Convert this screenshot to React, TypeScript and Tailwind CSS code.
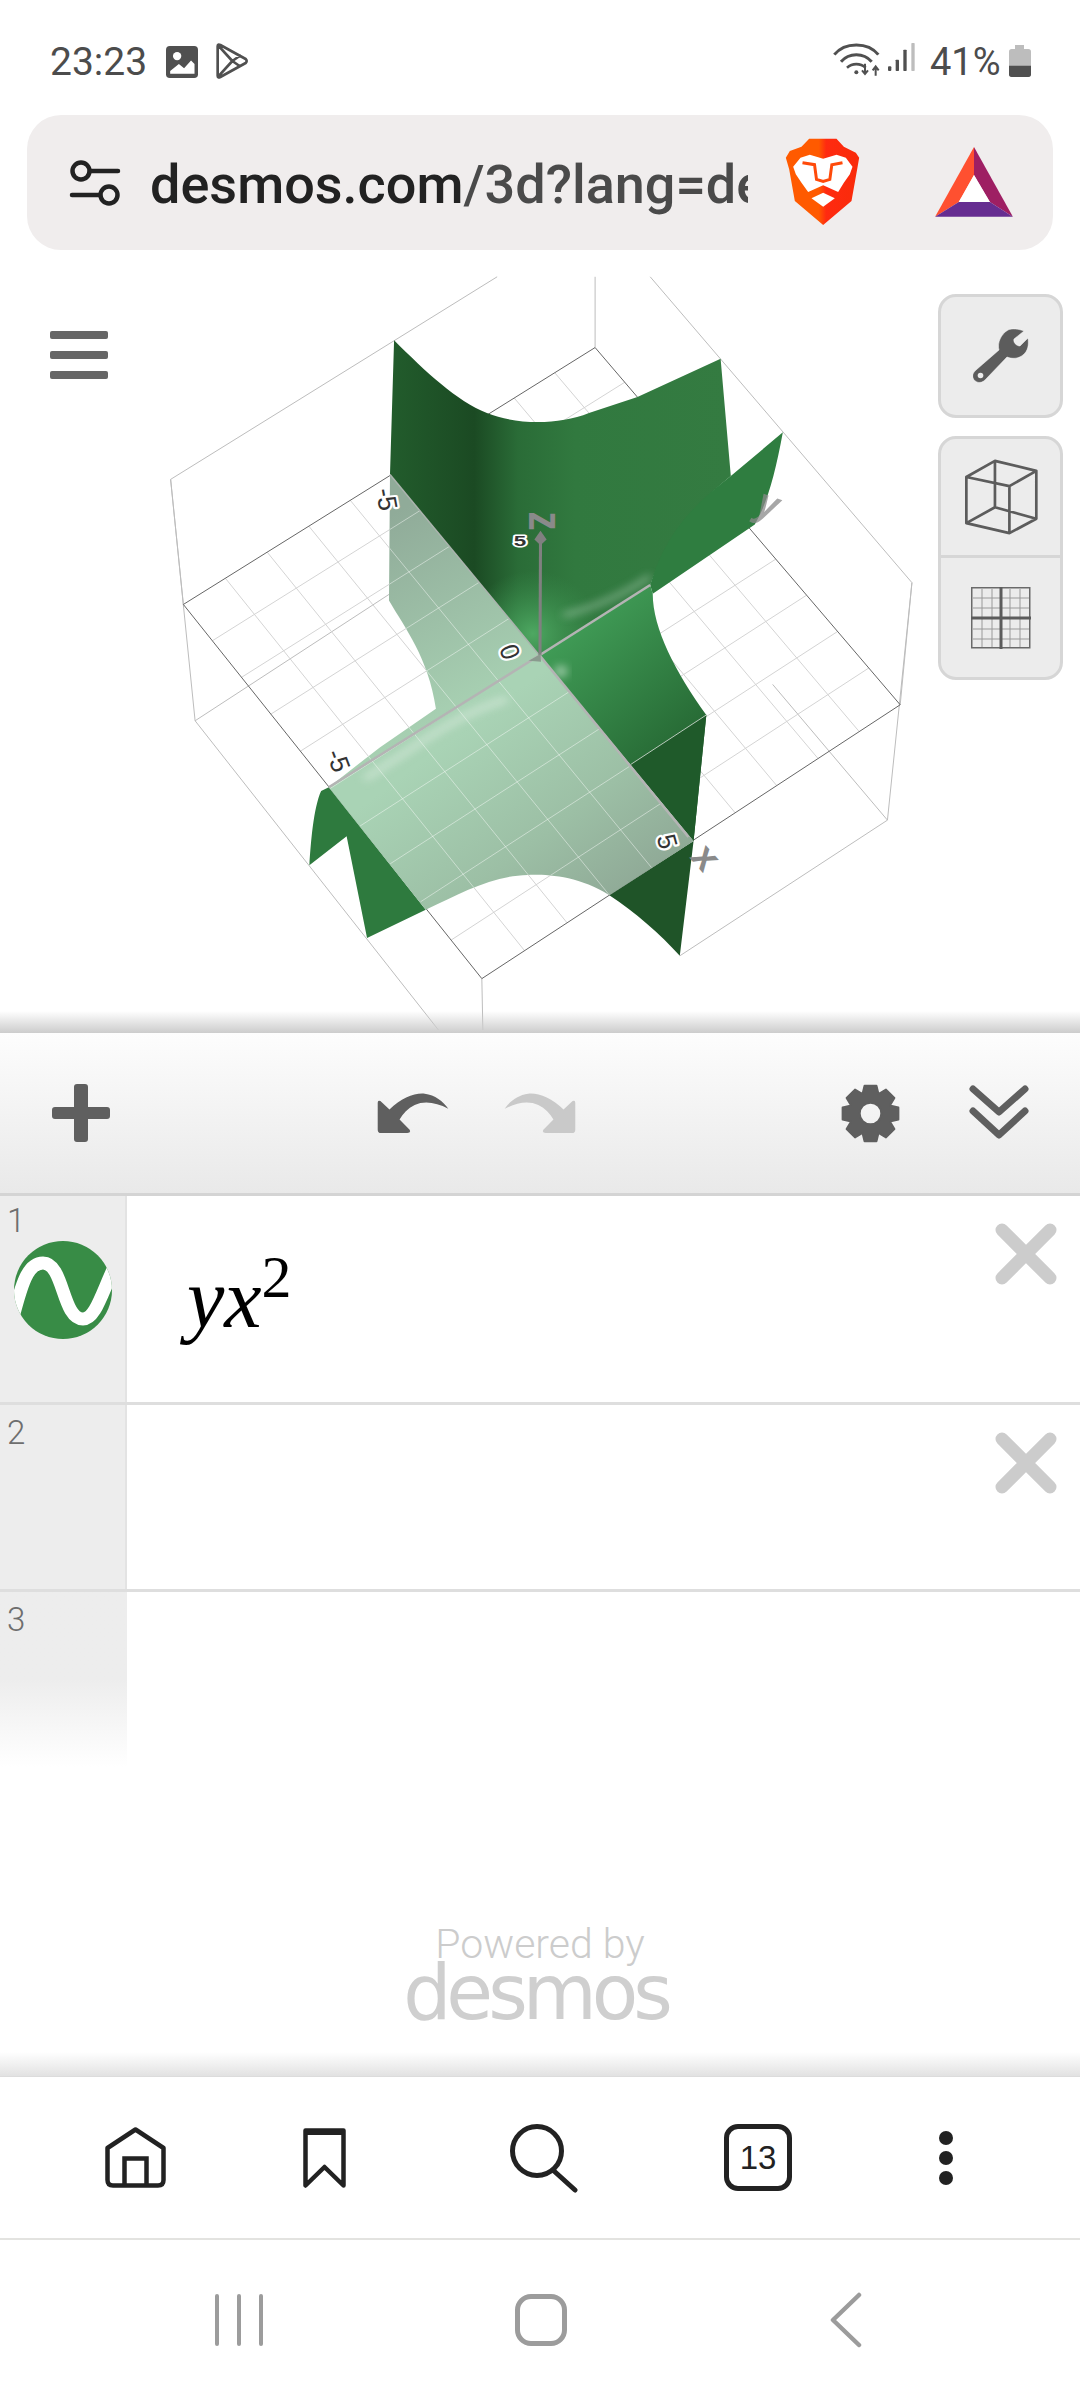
import React from "react";

type Pt = [number, number];

// z=0 square of the 3d box, in crop coordinates
const A: Pt = [85, 690];
const B: Pt = [892, 160];
const C: Pt = [1490, 897];
const D: Pt = [670, 1462];

const project = (u: number, v: number): Pt => {
  const dx1 = B[0] - C[0];
  const dx2 = D[0] - C[0];
  const sx = A[0] - B[0] + C[0] - D[0];
  const dy1 = B[1] - C[1];
  const dy2 = D[1] - C[1];
  const sy = A[1] - B[1] + C[1] - D[1];
  const den = dx1 * dy2 - dx2 * dy1;
  const g = (sx * dy2 - dx2 * sy) / den;
  const h = (dx1 * sy - sx * dy1) / den;
  const a = B[0] - A[0] + g * B[0];
  const b = D[0] - A[0] + h * D[0];
  const d = B[1] - A[1] + g * B[1];
  const e = D[1] - A[1] + h * D[1];
  const w = g * u + h * v + 1;
  return [(a * u + b * v + A[0]) / w, (d * u + e * v + A[1]) / w];
};

const gridLines: [Pt, Pt][] = [];
for (let i = 1; i < 10; i++) {
  gridLines.push([project(i / 10, 0), project(i / 10, 1)]);
  gridLines.push([project(0, i / 10), project(1, i / 10)]);
}

const boxLines = [
  "M60 432L700 14", "M60 432L108 930", "M108 930L585 1568", "M1000 14L1513 645", "M1513 645L1465 1135",
  "M1465 1135L1058 1415", "M892 14L892 160", "M670 1462L672 1568", "M108 930L490 668", "M1465 1135L1240 855",
  "M60 432L85 690", "M1513 645L1490 897", "M665 1215L666 1250",
];

const lightA = "M783 795L1085 1178L920 1290C860 1250 800 1247 760 1248C690 1250 630 1285 560 1320L370 1067Z";
const lightB = "M783 795L490 422L488 682C520 740 565 800 580 905L470 985L370 1067Z";

const gearPath = (() => {
  let d = "";
  const c = 90;
  for (let i = 0; i < 8; i++) {
    const t = -90 + i * 45;
    const pts: [number, number][] = [[t - 21, 64], [t - 12, 84], [t + 12, 84], [t + 21, 64]];
    pts.forEach(([ang, r], j) => {
      const rad = (ang * Math.PI) / 180;
      d += `${i === 0 && j === 0 ? "M" : "L"}${(c + r * Math.cos(rad)).toFixed(1)} ${(c + r * Math.sin(rad)).toFixed(1)}`;
    });
  }
  return d + "Z M90 58A32 32 0 1 0 90 122A32 32 0 1 0 90 58Z";
})();

const Graph = () => (
  <svg className="absolute inset-0" width="1080" height="783" viewBox="0 0 1080 783">
    <defs>
      <linearGradient id="backSheet" gradientUnits="userSpaceOnUse" x1="490" y1="0" x2="1150" y2="0">
        <stop offset="0" stopColor="#225c2c" />
        <stop offset="0.25" stopColor="#1b4a23" />
        <stop offset="0.38" stopColor="#2a6c37" />
        <stop offset="0.55" stopColor="#31793f" />
        <stop offset="1" stopColor="#347b41" />
      </linearGradient>
      <linearGradient id="rightSheet" gradientUnits="userSpaceOnUse" x1="800" y1="790" x2="1080" y2="1100">
        <stop offset="0" stopColor="#3f9a55" />
        <stop offset="1" stopColor="#1f5a2a" />
      </linearGradient>
      <linearGradient id="frontSheet" gradientUnits="userSpaceOnUse" x1="760" y1="850" x2="1060" y2="1230">
        <stop offset="0" stopColor="#a9d3b5" />
        <stop offset="0.55" stopColor="#9cbfa5" />
        <stop offset="1" stopColor="#8ea795" />
      </linearGradient>
      <linearGradient id="leftSheet" gradientUnits="userSpaceOnUse" x1="500" y1="500" x2="720" y2="900">
        <stop offset="0" stopColor="#90ab99" />
        <stop offset="1" stopColor="#a9d3b4" />
      </linearGradient>
      <radialGradient id="centerGlow" gradientUnits="userSpaceOnUse" cx="770" cy="750" r="130">
        <stop offset="0" stopColor="#4ea862" stopOpacity="1" />
        <stop offset="1" stopColor="#3c9350" stopOpacity="0" />
      </radialGradient>
      <filter id="soft" x="-40%" y="-60%" width="180%" height="220%">
        <feGaussianBlur stdDeviation="9" />
      </filter>
      <clipPath id="backClip">
        <path d="M498 145C560 210 620 270 680 295C740 320 820 320 880 295L975 262L1138 183L1158 425C1080 490 1030 560 1000 650L783 795L490 422Z" />
      </clipPath>
      <clipPath id="lightClip">
        <path d={lightA + lightB} />
      </clipPath>
    </defs>
    <g transform="translate(140 20) scale(0.5102 0.4847)">
      {boxLines.map((d) => (
        <path key={d} d={d} fill="none" stroke="#bdbdbd" strokeWidth="1" vectorEffect="non-scaling-stroke" />
      ))}
      {gridLines.map(([p, q], i) => (
        <line key={i} x1={p[0]} y1={p[1]} x2={q[0]} y2={q[1]} stroke="#d4d4d4" strokeWidth="1" vectorEffect="non-scaling-stroke" />
      ))}
      <path d={`M${A[0]} ${A[1]}L${B[0]} ${B[1]}L${C[0]} ${C[1]}L${D[0]} ${D[1]}Z`} fill="none" stroke="#666" strokeWidth="1" vectorEffect="non-scaling-stroke" />

      {/* surface, dark back sheets */}
      <path d="M498 145C560 210 620 270 680 295C740 320 820 320 880 295L975 262L1138 183L1158 425C1080 490 1030 560 1000 650L783 795L490 422Z" fill="url(#backSheet)" />
      <g clipPath="url(#backClip)">
        <circle cx="770" cy="750" r="130" fill="url(#centerGlow)" />
        <path d="M830 712C880 700 950 670 1000 632" fill="none" stroke="#cfe6d4" strokeWidth="9" opacity="0.55" filter="url(#soft)" />
      </g>
      <path d="M1260 335C1245 420 1230 480 1205 525L1005 668L1000 650C1030 540 1090 480 1158 425Z" fill="#2f7d40" />
      <path d="M783 795L1000 650L1005 668C1005 740 1050 830 1110 918L1085 1178Z" fill="url(#rightSheet)" />
      <path d="M1085 1178L1110 918L962 1020Z" fill="#1f5a2a" />
      <path d="M1085 1178L1058 1415C1020 1370 970 1325 920 1290Z" fill="#1f5428" />
      <path d="M370 1067L355 1075C340 1110 335 1180 332 1228L405 1168L445 1378L560 1320Z" fill="#2e7a3e" />
      <circle cx="825" cy="828" r="12" fill="#e8f5ea" opacity="0.6" filter="url(#soft)" />

      {/* part of the surface under the plane */}
      <path d={lightA} fill="url(#frontSheet)" />
      <path d={lightB} fill="url(#leftSheet)" />
      <g clipPath="url(#lightClip)">
        {gridLines.map(([p, q], i) => (
          <line key={i} x1={p[0]} y1={p[1]} x2={q[0]} y2={q[1]} stroke="#ffffff" strokeOpacity="0.45" strokeWidth="1" vectorEffect="non-scaling-stroke" />
        ))}
        <path d="M440 1050C540 985 620 915 720 885" fill="none" stroke="#e2f0e5" strokeWidth="14" opacity="0.55" filter="url(#soft)" />
      </g>
      <line x1="962" y1="1020" x2="1110" y2="918" stroke="#b8c9bb" strokeWidth="1" vectorEffect="non-scaling-stroke" />

      {/* axes */}
      <line x1="783" y1="795" x2="1000" y2="650" stroke="#b4b4b4" strokeWidth="5" />
      <line x1="783" y1="795" x2="370" y2="1067" stroke="#b4b4b4" strokeWidth="5" />
      <line x1="783" y1="795" x2="1075" y2="1170" stroke="#b4b4b4" strokeWidth="5" />
      <line x1="783" y1="795" x2="490" y2="422" stroke="#aab3ad" strokeWidth="3" />
      <line x1="784" y1="795" x2="785" y2="560" stroke="#808080" strokeWidth="6" />
      <path d="M785 538L797 556L785 568L773 556Z" fill="#808080" />
      <path d="M762 806L785 792L786 808Z" fill="#8a9a8e" />

      {/* tick labels */}
      <g fontFamily="'Liberation Sans', sans-serif" fontSize="52" fill="#333" stroke="#fff" strokeWidth="9" paintOrder="stroke" strokeLinejoin="round" textAnchor="middle">
        <text transform="translate(466 476) rotate(80)">-5</text>
        <text transform="translate(708 794) rotate(70)">0</text>
        <text transform="translate(372 1018) rotate(70)">-5</text>
        <text transform="translate(1016 1184) rotate(75)">5</text>
        <text transform="translate(745 570) scale(1 0.7)" fontSize="44" fontWeight="700">5</text>
      </g>
      <g fontFamily="'Liberation Sans', sans-serif" fontWeight="700" fill="#8a8a8a" textAnchor="middle">
        <text transform="translate(762 518) rotate(90) scale(1.1 1.3)" fontSize="72">z</text>
        <text transform="translate(1222 510) rotate(20) scale(1 1.2)" fontSize="72" fontStyle="italic" opacity="0.75">y</text>
        <text transform="translate(1090 1228) rotate(50)" fontSize="78">x</text>
      </g>
    </g>
  </svg>
);

const Lion = () => (
  <svg className="absolute left-[785px] top-[138px]" width="75" height="88" viewBox="46 26 224 264">
    <defs>
      <linearGradient id="lionFill" x1="0" y1="0" x2="1" y2="0">
        <stop offset="0" stopColor="#ff5a00" />
        <stop offset="0.45" stopColor="#ff5a00" />
        <stop offset="0.55" stopColor="#ff2a10" />
        <stop offset="1" stopColor="#f92b0a" />
      </linearGradient>
    </defs>
    <path d="M118 28L200 28L222 52L258 70L268 85L262 120L245 215L160 287L75 215L58 120L48 85L60 65L95 52Z" fill="url(#lionFill)" />
    <path d="M70 112L92 85L120 76L160 88L200 76L228 85L248 112L240 135L222 160L205 188L160 168L115 188L95 160L78 135Z" fill="#fff" />
    <path d="M98 100L134 106L140 150L160 156L180 150L186 106L218 100" fill="none" stroke="#ff4a0a" strokeWidth="9" />
    <path d="M125 207L160 190L195 207L160 232Z" fill="#fff" />
  </svg>
);

const Bat = () => (
  <svg className="absolute left-[935px] top-[147px]" width="78" height="70" viewBox="498 52 230 207">
    <path d="M613 52L613 135L568 215L498 258Z" fill="#ff5030" />
    <path d="M613 52L728 258L660 215L613 135Z" fill="#9e1f63" />
    <path d="M498 258L568 215L660 215L728 258Z" fill="#662d91" />
    <path d="M613 135L568 215L660 215Z" fill="#fff" />
  </svg>
);

const CloseX = () => (
  <svg width="62" height="62" viewBox="0 0 62 62">
    <path d="M7 7L55 55M55 7L7 55" stroke="#cccccc" strokeWidth="13" strokeLinecap="round" />
  </svg>
);

const App = () => {
  return (
    <div className="relative flex h-[2400px] w-[1080px] flex-col overflow-hidden bg-white font-['Roboto',sans-serif]">
      {/* status bar */}
      <div className="relative h-[115px] shrink-0 text-[38px] text-[#4c4c4c]">
        <div className="absolute left-[50px] top-[39px] leading-[46px] text-[39px]">23:23</div>
        <svg className="absolute left-[166px] top-[46px]" width="32" height="32" viewBox="0 0 92 92">
          <rect width="92" height="92" rx="11" fill="#505050" />
          <circle cx="32" cy="29" r="12" fill="#fff" />
          <path d="M12 72L37 52L52 64L72 42L82 52V80H12Z" fill="#fff" />
        </svg>
        <svg className="absolute left-[215px] top-[43px]" width="34" height="36" viewBox="0 0 102 108">
          <path d="M8 10Q8 2 16 6L92 48Q98 54 92 60L16 102Q8 106 8 98Z M10 8L52 54L10 100M52 54L78 36M52 54L78 72" fill="none" stroke="#505050" strokeWidth="8" strokeLinejoin="round" />
        </svg>
        <svg className="absolute left-[833px] top-[43px]" width="84" height="36" viewBox="0 0 252 108">
          <path d="M4 35C35 -4 105 -4 136 35M24 56C48 28 92 28 116 56" fill="none" stroke="#505050" strokeWidth="9" />
          <path d="M42 74C58 60 82 60 98 74" fill="none" stroke="#505050" strokeWidth="8" />
          <circle cx="70" cy="88" r="6" fill="#505050" />
          <path d="M96 62V92M87 82L96 93L105 82M128 98V74M119 82L128 70L137 82" fill="none" stroke="#505050" strokeWidth="6" />
          <rect x="165" y="70" width="10" height="14" rx="3" fill="#505050" />
          <rect x="188" y="50" width="10" height="34" rx="2" fill="#505050" />
          <rect x="211" y="20" width="10" height="64" rx="2" fill="#505050" />
          <rect x="235" y="0" width="10" height="84" rx="2" fill="#bdbdbd" />
        </svg>
        <div className="absolute left-[930px] top-[39px] text-[38px] leading-[46px]">41%</div>
        <svg className="absolute left-[1009px] top-[45px]" width="22" height="32" viewBox="0 0 66 96">
          <path d="M18 0H45V12H58Q66 12 66 20V88Q66 96 58 96H8Q0 96 0 88V20Q0 12 8 12H18Z" fill="#bdbdbd" />
          <path d="M0 62H66V88Q66 96 58 96H8Q0 96 0 88Z" fill="#505050" />
        </svg>
      </div>

      {/* url bar */}
      <div className="mx-[27px] flex h-[135px] shrink-0 items-center rounded-[34px] bg-[#f0eded]">
        <svg className="ml-[42px]" width="52" height="50" viewBox="0 0 52 50">
          <circle cx="12" cy="13" r="8.5" fill="none" stroke="#222" strokeWidth="4.5" />
          <path d="M21 13H49M3 37H31" stroke="#222" strokeWidth="4.5" strokeLinecap="round" />
          <circle cx="40" cy="37" r="8.5" fill="none" stroke="#222" strokeWidth="4.5" />
        </svg>
        <div className="ml-[29px] mt-[4px] w-[598px] overflow-hidden whitespace-nowrap text-[54px] font-medium leading-[62px] text-[#4a4a4a]">
          <span className="text-[#222]">desmos.com</span>/3d?lang=de
        </div>
      </div>
      <Lion />
      <Bat />

      {/* 3d graph */}
      <div className="relative h-[783px] shrink-0">
        <Graph />
        <div className="absolute left-[50px] top-[81px] flex flex-col gap-[12px]">
          <div className="h-[8px] w-[58px] rounded-[2px] bg-[#666]" />
          <div className="h-[8px] w-[58px] rounded-[2px] bg-[#666]" />
          <div className="h-[8px] w-[58px] rounded-[2px] bg-[#666]" />
        </div>
        <div className="absolute left-[938px] top-[44px] flex flex-col gap-[18px]">
          <div className="flex h-[124px] w-[125px] items-center justify-center rounded-[18px] border-[3px] border-[#d6d6d6] bg-[#ececec]">
            <svg width="56" height="56" viewBox="0 0 56 56">
              <path d="M35 2C39 0 46 1 51 3L41 11C40 14 43 18 47 18L55 10C56 17 55 23 50 27C45 31 39 31 34 29L12 52C8 56 2 55 0 50C-1 47 0 45 3 42L26 22C24 15 28 6 35 2Z" fill="#5c5c5c" stroke="#fff" strokeWidth="0.5" />
              <circle cx="7.5" cy="47.5" r="2.8" fill="#ececec" />
            </svg>
          </div>
          <div className="flex h-[244px] w-[125px] flex-col rounded-[18px] border-[3px] border-[#d6d6d6] bg-[#ececec]">
            <div className="flex h-[119px] shrink-0 items-center justify-center border-b-[3px] border-[#d6d6d6]">
              <svg width="74" height="76" viewBox="190 565 220 225">
                <path d="M197 618L282 570L405 600L325 645ZM197 755L282 708L405 742L325 785ZM197 618V755M282 570V708M405 600V742M325 645V785" fill="none" stroke="#5c5c5c" strokeWidth="8" strokeLinejoin="round" />
              </svg>
            </div>
            <div className="flex flex-1 items-center justify-center">
              <svg width="60" height="62" viewBox="0 0 60 62">
                <rect x="0.75" y="0.75" width="58" height="60" fill="none" stroke="#6a6a6a" strokeWidth="1.5" />
                <path d="M2 11H58M2 21H58M2 42H58M2 52H58M11 2V60M21 2V60M39 2V60M49 2V60" stroke="#9a9a9a" strokeWidth="1" />
                <path d="M30 0V62M0 31H60" stroke="#5c5c5c" strokeWidth="3" />
              </svg>
            </div>
          </div>
        </div>
        <div className="absolute bottom-0 left-0 h-[22px] w-full bg-linear-to-b from-transparent to-[#cccccc]" />
      </div>

      {/* expression list */}
      <div className="flex h-[163px] shrink-0 items-center border-b-[3px] border-[#d4d4d4] bg-linear-to-b from-[#fdfdfd] to-[#e9e9e9]">
        <svg className="ml-[52px]" width="58" height="58" viewBox="0 0 58 58">
          <path d="M22 3Q22 0 25 0H33Q36 0 36 3V23H55Q58 23 58 26V32Q58 35 55 35H36V55Q36 58 33 58H25Q22 58 22 55V35H3Q0 35 0 32V26Q0 23 3 23H22Z" fill="#5f5f5f" />
        </svg>
        <svg className="ml-[267px]" width="72" height="41" viewBox="48 56 214 122">
          <path d="M50 85Q50 76 58 80L85 105C120 70 160 55 190 58C220 62 245 80 260 103C225 85 190 78 160 92C140 102 125 118 115 135L145 165Q150 175 138 175H60Q50 175 50 165Z" fill="#5f5f5f" />
        </svg>
        <svg className="ml-[55px]" width="72" height="41" viewBox="48 56 214 122">
          <path d="M260 85Q260 76 252 80L225 105C190 70 150 55 120 58C90 62 65 80 50 103C85 85 120 78 150 92C170 102 185 118 195 135L165 165Q160 175 172 175H250Q260 175 260 165Z" fill="#c9c9c9" />
        </svg>
        <svg className="ml-[264px]" width="61" height="61" viewBox="0 0 180 180">
          <path d={gearPath} fill="#5f5f5f" fillRule="evenodd" stroke="#5f5f5f" strokeWidth="6" strokeLinejoin="round" />
        </svg>
        <svg className="ml-[68px]" width="60" height="56" viewBox="0 0 60 56">
          <path d="M4 4L30 27L56 4M4 26L30 50L56 26" fill="none" stroke="#5f5f5f" strokeWidth="7" strokeLinecap="round" strokeLinejoin="round" />
        </svg>
      </div>

      <div className="flex h-[209px] shrink-0 border-b-[3px] border-[#dedede]">
        <div className="flex w-[127px] shrink-0 flex-col border-r-[2px] border-[#e3e3e3] bg-[#ededed]">
          <div className="pl-[7px] pt-[6px] text-[33px] font-light leading-[38px] text-[#6e6e6e]">1</div>
          <div className="relative ml-[14px] mt-[1px] h-[98px] w-[98px] overflow-hidden rounded-full bg-[#388c46]">
            <svg width="98" height="98" viewBox="0 0 98 98">
              <path d="M-4 88C8 40 14 22 29 22C50 22 48 78 69 78C82 78 88 50 104 18" fill="none" stroke="#fff" strokeWidth="13" />
            </svg>
          </div>
        </div>
        <div className="relative flex flex-1 justify-between">
          <div className="ml-[60px] mt-[55px] font-['Liberation_Serif',serif] text-[84px] italic leading-[96px] text-black">
            yx<sup className="relative -top-[30px] ml-0 align-baseline text-[60px] not-italic leading-none">2</sup>
          </div>
          <div className="mr-[23px] mt-[27px]">
            <CloseX />
          </div>
        </div>
      </div>

      <div className="flex h-[187px] shrink-0 border-b-[3px] border-[#dedede]">
        <div className="w-[127px] shrink-0 border-r-[2px] border-[#e3e3e3] bg-[#ededed] pl-[7px] pt-[9px] text-[33px] font-light leading-[38px] text-[#6e6e6e]">2</div>
        <div className="flex flex-1 justify-end pr-[23px] pt-[27px]">
          <CloseX />
        </div>
      </div>

      <div className="flex h-[175px] shrink-0">
        <div className="w-[127px] shrink-0 bg-linear-to-b from-[#ededed] via-[#ededed] via-50% to-white pl-[7px] pt-[9px] text-[33px] font-light leading-[38px] text-[#6e6e6e]">3</div>
      </div>

      {/* powered by */}
      <div className="relative flex flex-1 flex-col items-center">
        <div className="mt-[154px] text-[41px] font-light leading-[46px] text-[#cccccc]">Powered by</div>
        <div className="-ml-[9px] font-['DejaVu_Sans',sans-serif] text-[76px] leading-[52px] tracking-[-5px] text-[#cfcfcf]">desmos</div>
        <div className="absolute bottom-0 left-0 h-[24px] w-full bg-linear-to-b from-white to-[#e2e2e2]" />
      </div>

      {/* browser bottom bar */}
      <div className="flex h-[164px] shrink-0 items-center border-b-[2px] border-t-[1px] border-b-[#e3e3e0] border-t-[#dcdcdc]">
        <svg className="ml-[105px]" width="61" height="61" viewBox="0 0 61 61">
          <path d="M2.5 21L30.5 2.5L58.5 21V53Q58.5 58.5 53 58.5H8Q2.5 58.5 2.5 53Z" fill="none" stroke="#222" strokeWidth="4.5" strokeLinejoin="round" />
          <path d="M19.5 58V31.5H41.5V58" fill="none" stroke="#222" strokeWidth="4.5" />
        </svg>
        <svg className="ml-[137px]" width="43" height="60" viewBox="0 0 43 60">
          <path d="M2.5 2.5H40.5V57.5L21.5 39L2.5 57.5Z" fill="none" stroke="#222" strokeWidth="4.5" strokeLinejoin="round" />
          <path d="M2 4H41" stroke="#222" strokeWidth="6" />
        </svg>
        <svg className="ml-[164px]" width="68" height="70" viewBox="0 0 68 70">
          <circle cx="27" cy="28" r="24.5" fill="none" stroke="#222" strokeWidth="5" />
          <path d="M44 48L65 67" stroke="#222" strokeWidth="5" strokeLinecap="round" />
        </svg>
        <div className="ml-[146px] flex h-[67px] w-[68px] items-center justify-center rounded-[14px] border-[5px] border-[#222] font-['Liberation_Sans',sans-serif] text-[33px] font-medium text-[#222]">13</div>
        <div className="ml-[147px] flex flex-col gap-[6px]">
          <div className="h-[14px] w-[14px] rounded-full bg-[#222]" />
          <div className="h-[14px] w-[14px] rounded-full bg-[#222]" />
          <div className="h-[14px] w-[14px] rounded-full bg-[#222]" />
        </div>
      </div>

      {/* android nav */}
      <div className="flex h-[160px] shrink-0 items-center">
        <div className="ml-[215px] flex gap-[18px]">
          <div className="h-[52px] w-[4px] rounded-full bg-[#9c9c9c]" />
          <div className="h-[52px] w-[4px] rounded-full bg-[#9c9c9c]" />
          <div className="h-[52px] w-[4px] rounded-full bg-[#9c9c9c]" />
        </div>
        <div className="ml-[252px] h-[52px] w-[52px] rounded-[16px] border-[5px] border-[#9c9c9c]" />
        <svg className="ml-[263px]" width="32" height="56" viewBox="0 0 32 56">
          <path d="M29 3L3 28L29 53" fill="none" stroke="#9c9c9c" strokeWidth="4.5" strokeLinecap="round" strokeLinejoin="round" />
        </svg>
      </div>
    </div>
  );
};

export default App;
